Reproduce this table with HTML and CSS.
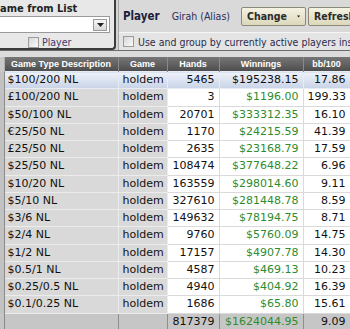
FILE: index.html
```html
<!DOCTYPE html>
<html>
<head>
<meta charset="utf-8">
<link rel="stylesheet" href="styles.css">
</head>
<body>
<div class="top">
  <div class="gamebox">
    <div class="gb-title">Game from List</div>
    <div class="combo">
      <span class="combo-btn"><svg width="7" height="4" viewBox="0 0 7 4"><path d="M0 0h7L3.5 4z" fill="#222"/></svg></span>
    </div>
    <div class="gb-check"><span class="chk"></span><span class="gb-player">Player</span></div>
  </div>
  <div class="playerbox">
    <div class="pb-top">
      <span class="pb-label">Player</span>
      <span class="pb-name">Girah (Alias)</span>
      <span class="btn btn-change">Change<svg class="caret" width="5" height="3" viewBox="0 0 5 3"><path d="M0 0h5L2.5 3z" fill="#222"/></svg></span>
      <span class="btn btn-refresh">Refresh</span>
    </div>
    <div class="pb-bottom"><span class="chk"></span><span class="pb-text">Use and group by currently active players instead</span></div>
  </div>
</div>
<div class="strip"></div>
<table class="grid">
  <colgroup>
    <col class="c0"><col class="c1"><col class="c2"><col class="c3"><col class="c4"><col class="c5">
  </colgroup>
  <thead>
    <tr><th class="gut"></th><th>Game Type Description</th><th>Game</th><th>Hands</th><th>Winnings</th><th>bb/100</th></tr>
  </thead>
  <tbody>
    <tr class="sel"><td class="gut"></td><td class="gt">$100/200 NL</td><td class="gm">holdem</td><td class="num">5465</td><td class="num">$195238.15</td><td class="num">17.86</td></tr>
    <tr><td class="gut"></td><td class="gt">£100/200 NL</td><td class="gm">holdem</td><td class="num">3</td><td class="num win">$1196.00</td><td class="num">199.33</td></tr>
    <tr><td class="gut"></td><td class="gt">$50/100 NL</td><td class="gm">holdem</td><td class="num">20701</td><td class="num win">$333312.35</td><td class="num">16.10</td></tr>
    <tr><td class="gut"></td><td class="gt">€25/50 NL</td><td class="gm">holdem</td><td class="num">1170</td><td class="num win">$24215.59</td><td class="num">41.39</td></tr>
    <tr><td class="gut"></td><td class="gt">£25/50 NL</td><td class="gm">holdem</td><td class="num">2635</td><td class="num win">$23168.79</td><td class="num">17.59</td></tr>
    <tr><td class="gut"></td><td class="gt">$25/50 NL</td><td class="gm">holdem</td><td class="num">108474</td><td class="num win">$377648.22</td><td class="num">6.96</td></tr>
    <tr><td class="gut"></td><td class="gt">$10/20 NL</td><td class="gm">holdem</td><td class="num">163559</td><td class="num win">$298014.60</td><td class="num">9.11</td></tr>
    <tr><td class="gut"></td><td class="gt">$5/10 NL</td><td class="gm">holdem</td><td class="num">327610</td><td class="num win">$281448.78</td><td class="num">8.59</td></tr>
    <tr><td class="gut"></td><td class="gt">$3/6 NL</td><td class="gm">holdem</td><td class="num">149632</td><td class="num win">$78194.75</td><td class="num">8.71</td></tr>
    <tr><td class="gut"></td><td class="gt">$2/4 NL</td><td class="gm">holdem</td><td class="num">9760</td><td class="num win">$5760.09</td><td class="num">14.75</td></tr>
    <tr><td class="gut"></td><td class="gt">$1/2 NL</td><td class="gm">holdem</td><td class="num">17157</td><td class="num win">$4907.78</td><td class="num">14.30</td></tr>
    <tr><td class="gut"></td><td class="gt">$0.5/1 NL</td><td class="gm">holdem</td><td class="num">4587</td><td class="num win">$469.13</td><td class="num">10.23</td></tr>
    <tr><td class="gut"></td><td class="gt">$0.25/0.5 NL</td><td class="gm">holdem</td><td class="num">4940</td><td class="num win">$404.92</td><td class="num">16.39</td></tr>
    <tr><td class="gut"></td><td class="gt">$0.1/0.25 NL</td><td class="gm">holdem</td><td class="num">1686</td><td class="num win">$65.80</td><td class="num">15.61</td></tr>
    <tr class="total"><td class="gut"></td><td></td><td></td><td class="num">817379</td><td class="num win">$1624044.95</td><td class="num">9.09</td></tr>
  </tbody>
</table>
</body>
</html>
```
FILE: styles.css
```css
html, body {
  margin: 0;
  padding: 0;
}
body {
  width: 350px;
  height: 329px;
  overflow: hidden;
  background: #c8c8c8;
  font-family: "DejaVu Sans", sans-serif;
  color: #111;
}

.top {
  display: flex;
  height: 50px;
  background: #d4d4d4;
}

.gamebox {
  flex: none;
  width: 131px;
  margin-left: -15px;
  box-sizing: border-box;
  height: 50px;
  border: 2px solid #3c3c3c;
  border-top: none;
  border-radius: 0 0 4px 4px;
  background: #e8e8e8;
  display: flex;
  flex-direction: column;
}
.gb-title {
  font-family: "DejaVu Sans Condensed", sans-serif;
  font-weight: bold;
  font-size: 11px;
  color: #222;
  padding: 2px 0 0 5px;
  height: 13px;
  line-height: 13px;
  white-space: nowrap;
}
.combo {
  margin: 1px 4px 0 8px;
  height: 16px;
  background: #fff;
  border: 1px solid #9a9a9a;
  display: flex;
  justify-content: flex-end;
  align-items: center;
  padding-right: 2px;
}
.combo-btn {
  width: 12px;
  height: 10px;
  border: 1px solid #9a9a9a;
  background: linear-gradient(#f6f6f6, #d8d8d8);
  display: flex;
  align-items: center;
  justify-content: center;
}
.gb-check {
  display: flex;
  align-items: center;
  margin-top: 3px;
  padding-left: 41px;
}
.chk {
  width: 9px;
  height: 9px;
  border: 1px solid #9c9c9c;
  background: linear-gradient(135deg, #d8d8d8, #fafafa);
  flex: none;
}
.gb-player {
  font-family: "DejaVu Sans Condensed", sans-serif;
  font-size: 10.5px;
  color: #3e3a6e;
  margin-left: 3px;
}

.playerbox {
  flex: 1;
  margin-left: 2px;
  display: flex;
  flex-direction: column;
  border-left: 1px solid #a8a8a8;
  min-width: 0;
  overflow: hidden;
}
.pb-top {
  height: 33px;
  box-sizing: border-box;
  display: flex;
  align-items: center;
  background: #d9d9d9;
  border-bottom: 1px solid #f6f6f6;
  padding-left: 4px;
  white-space: nowrap;
}
.pb-label {
  font-family: "DejaVu Sans Condensed", sans-serif;
  font-weight: bold;
  font-size: 11.5px;
  color: #1c1c3c;
}
.pb-name {
  font-family: "DejaVu Sans Condensed", sans-serif;
  font-size: 10.5px;
  color: #2c2c5c;
  margin-left: 12px;
}
.btn {
  flex: none;
  height: 19px;
  box-sizing: border-box;
  border: 1px solid #8c8a78;
  border-radius: 2px;
  background: linear-gradient(#f4f2e2, #dcd8bc);
  font-family: "DejaVu Sans Condensed", sans-serif;
  font-weight: bold;
  font-size: 10.5px;
  color: #2a2a2a;
  display: flex;
  align-items: center;
  padding: 0 5px;
}
.btn-change {
  margin-left: 11px;
  width: 65px;
}
.caret {
  margin-left: 10px;
}
.btn-refresh {
  margin-left: 2px;
}
.pb-bottom {
  flex: 1;
  display: flex;
  align-items: center;
  background: #e4e4e4;
  padding-left: 4px;
  white-space: nowrap;
}
.pb-text {
  font-family: "DejaVu Sans Condensed", sans-serif;
  font-size: 10.5px;
  color: #2c2c4c;
  margin-left: 4px;
}

.strip {
  height: 6px;
  background: #dcdcdc;
  border-top: 1px solid #6c6c6c;
}

.grid {
  border-collapse: collapse;
  table-layout: fixed;
  width: 350px;
}
.c0 { width: 4px; }
.c1 { width: 114px; }
.c2 { width: 49px; }
.c3 { width: 52px; }
.c4 { width: 84px; }
.c5 { width: 47px; }

.grid th {
  height: 14px;
  padding: 0;
  background: linear-gradient(#767676, #4e4e4e);
  color: #fff;
  font-family: "Liberation Sans", sans-serif;
  font-weight: bold;
  font-size: 9px;
  text-align: center;
  border-left: 1px solid #b0b0b0;
  border-right: 1px solid #8a8a8a;
  white-space: nowrap;
  overflow: hidden;
}
.grid th.gut {
  background: #c8c8c8;
  border: none;
}

.grid td {
  height: 16.25px;
  padding: 0 4px 0 4px;
  font-size: 11px;
  line-height: 16px;
  white-space: nowrap;
  overflow: hidden;
  background: #fff;
  border: 1px solid #dadada;
}
.grid td.gut {
  padding: 0;
  background: #c2c2c2;
  border: none;
  border-right: 1px solid #8a8a8a;
}
.grid td.gt,
.grid td.gm {
  background: #d9d9d9;
  border-color: #ececec;
}
.grid td.gt { padding-left: 3px; }
.grid td.num { text-align: right; }
.grid td.win { color: #2e8b2e; }

.grid tr.sel td {
  background: linear-gradient(#eef2fa, #c8d3e6);
  border-color: #e6ebf4;
}
.grid tr.sel td.gut {
  background: #c2c2c2;
  border: none;
  border-right: 1px solid #8a8a8a;
}
.grid tr.sel td.num { color: #111; }

.grid tr.total td {
  background: #c6c6c6;
  border: 1px solid #c6c6c6;
  border-left: 1px solid #ececec;
  border-right: 1px solid #8e8e8e;
}
.grid tr.total td.gut {
  border: none;
  border-right: 1px solid #8a8a8a;
}
.grid tr.total td.win { color: #2e8b2e; }
```
